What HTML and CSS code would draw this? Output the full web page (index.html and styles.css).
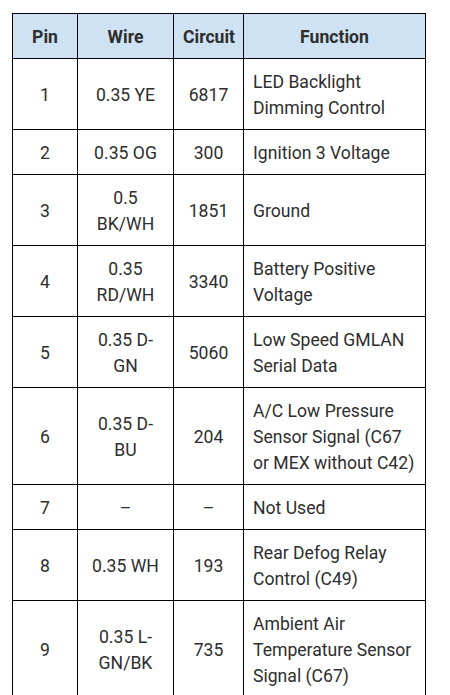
FILE: index.html
```html
<!DOCTYPE html>
<html>
<head>
<meta charset="utf-8">
<link rel="stylesheet" href="styles.css">
</head>
<body>
<table class="pins">
  <colgroup>
    <col class="c-pin"><col class="c-wire"><col class="c-circ"><col class="c-func">
  </colgroup>
  <thead>
    <tr><th>Pin</th><th>Wire</th><th>Circuit</th><th>Function</th></tr>
  </thead>
  <tbody>
    <tr><td>1</td><td>0.35 YE</td><td>6817</td><td class="fn">LED Backlight Dimming Control</td></tr>
    <tr><td>2</td><td>0.35 OG</td><td>300</td><td class="fn">Ignition 3 Voltage</td></tr>
    <tr><td>3</td><td>0.5 BK/WH</td><td>1851</td><td class="fn">Ground</td></tr>
    <tr><td>4</td><td>0.35 RD/WH</td><td>3340</td><td class="fn">Battery Positive Voltage</td></tr>
    <tr><td>5</td><td>0.35 D-GN</td><td>5060</td><td class="fn">Low Speed GMLAN Serial Data</td></tr>
    <tr><td>6</td><td>0.35 D-BU</td><td>204</td><td class="fn">A/C Low Pressure Sensor Signal (C67 or MEX without C42)</td></tr>
    <tr><td>7</td><td>–</td><td>–</td><td class="fn">Not Used</td></tr>
    <tr><td>8</td><td>0.35 WH</td><td>193</td><td class="fn">Rear Defog Relay Control (C49)</td></tr>
    <tr><td>9</td><td>0.35 L-GN/BK</td><td>735</td><td class="fn">Ambient Air Temperature Sensor Signal (C67)</td></tr>
  </tbody>
</table>
</body>
</html>
```
FILE: styles.css
```css
html, body {
  margin: 0;
  padding: 0;
  background: #ffffff;
}
body {
  padding: 13px 0 0 12px;
  font-family: Roboto, "Liberation Sans", sans-serif;
  font-size: 17.6px;
  color: #2e2e2e;
}
.pins {
  border-collapse: collapse;
  table-layout: fixed;
  width: 413px;
}
.c-pin { width: 65px; }
.c-wire { width: 96px; }
.c-circ { width: 70px; }
.c-func { width: 182px; }
.pins th, .pins td {
  border: 1px solid #000000;
  padding: 10px 9px 8px;
  line-height: 26px;
  text-align: center;
  vertical-align: middle;
}
.pins th {
  background: #cfe2f3;
  font-weight: 700;
}
.pins td.fn {
  text-align: left;
  padding-left: 9px;
  padding-right: 8px;
}
```
